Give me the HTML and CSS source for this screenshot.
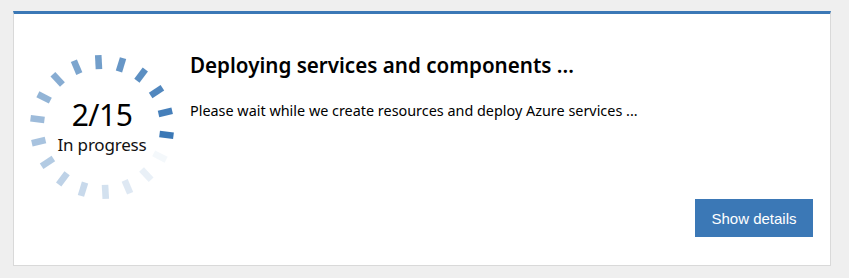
FILE: index.html
```html
<!DOCTYPE html>
<html lang="en">
<head>
    <meta charset="UTF-8">
    <meta name="viewport" content="width=device-width, initial-scale=1.0">
    <title>Deploying</title>
    <link rel="stylesheet" href="styles.css">
</head>
<body>
    <div class="card">
        <div class="progress-ring">
            <svg class="ring" width="150" height="150" viewBox="-75 -75 150 150">
                <g id="ticks" fill="#3b78b6" transform="rotate(-3)"></g>
            </svg>
            <div class="ring-label">
                <div class="count">2/15</div>
                <div class="state">In progress</div>
            </div>
        </div>

        <div class="content">
            <h1 class="title">Deploying services and components ...</h1>
            <p class="message">Please wait while we create resources and deploy Azure services ...</p>
            <div class="actions">
                <button class="btn">Show details</button>
            </div>
        </div>
    </div>

    <script>
        // 18 ticks, darkest at 100deg, fading clockwise from 120deg
        const ticks = document.getElementById('ticks');
        for (let i = 0; i < 18; i++) {
            const angle = i * 20;
            const k = (((angle - 120) / 20) % 18 + 18) % 18;
            const rect = document.createElementNS('http://www.w3.org/2000/svg', 'rect');
            rect.setAttribute('x', -3.3);
            rect.setAttribute('y', -72);
            rect.setAttribute('width', 6.6);
            rect.setAttribute('height', 14);
            rect.setAttribute('opacity', ((k + 1) / 18).toFixed(3));
            rect.setAttribute('transform', 'rotate(' + angle + ')');
            ticks.appendChild(rect);
        }
    </script>
</body>
</html>
```

FILE: styles.css
```css
* {
    margin: 0;
    padding: 0;
    box-sizing: border-box;
}

body {
    font-family: "Noto Sans", "Open Sans", sans-serif;
    background: #efefef;
    color: #000;
    padding: 11px 18px 12px 13px;
}

.card {
    display: flex;
    height: 255px;
    background: #fff;
    border: 1px solid #d9d9d9;
    border-top: 3px solid #3b78b6;
    padding: 38px 17px 28px 13px;
}

.progress-ring {
    display: grid;
    place-items: center;
    width: 150px;
    height: 150px;
    flex-shrink: 0;
}

.ring,
.ring-label {
    grid-area: 1 / 1;
}

.ring-label {
    text-align: center;
}

.count {
    font-size: 30px;
    line-height: 30px;
    letter-spacing: -0.5px;
}

.state {
    font-size: 17px;
    line-height: 20px;
    margin-top: 5px;
    color: #111;
    letter-spacing: -0.2px;
}

.content {
    flex: 1;
    display: flex;
    flex-direction: column;
    margin-left: 13px;
}

.title {
    font-size: 20.6px;
    font-weight: 600;
    line-height: 26px;
}

.message {
    font-size: 14.4px;
    line-height: 20px;
    margin-top: 23px;
}

.actions {
    margin-top: auto;
    display: flex;
    justify-content: flex-end;
}

.btn {
    background: #3b78b6;
    color: #fff;
    border: none;
    width: 118px;
    height: 38px;
    font-family: "Liberation Sans", Arial, sans-serif;
    font-size: 15px;
    cursor: pointer;
}
```
